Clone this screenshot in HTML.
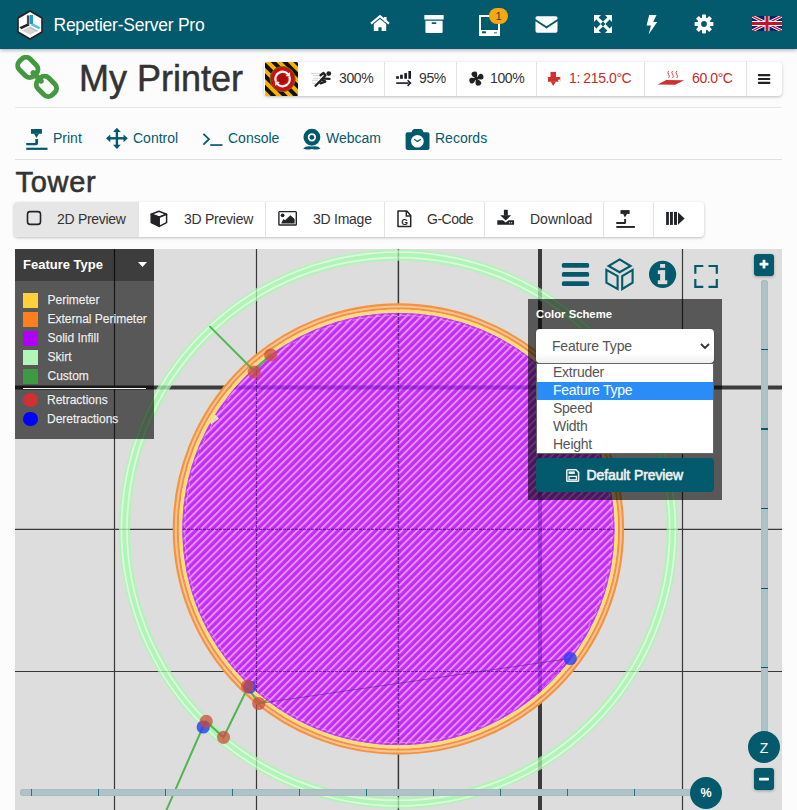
<!DOCTYPE html>
<html><head><meta charset="utf-8">
<style>
*{box-sizing:border-box}
html,body{margin:0;padding:0}
body{width:797px;height:810px;overflow:hidden;position:relative;background:#fcfcfc;font-family:"Liberation Sans",sans-serif;color:#333}
.a{position:absolute}
#hdr{left:0;top:0;width:797px;height:49px;background:#035a6c;box-shadow:0 1px 4px rgba(0,0,0,.35);z-index:5}
#title{left:53.5px;top:15px;font-size:17.5px;letter-spacing:-0.25px;color:#fff;line-height:20px;white-space:nowrap}
.ico{position:absolute;display:block}
#pname{left:79px;top:57px;font-size:36px;line-height:44px;color:#333;white-space:nowrap;-webkit-text-stroke:0.5px #333}
#hr1{left:15px;top:107px;width:767px;height:1px;background:#e6e6e6}
#hr2{left:15px;top:159px;width:767px;height:1px;background:#e0e0e0}
#status{left:264px;top:62px;width:518px;height:34px;background:#fff;border-radius:4px;box-shadow:0 1px 3px rgba(0,0,0,.25)}
.dv{position:absolute;top:0;width:1px;height:34px;background:#e3e3e3}
.st{position:absolute;top:8px;font-size:14px;line-height:17px;white-space:nowrap;color:#333;letter-spacing:-0.4px}
.red{color:#c62828}
.tab{position:absolute;top:130px;font-size:14px;line-height:17px;color:#035a6c;white-space:nowrap}
#tower{left:15.5px;top:164.5px;font-size:29px;line-height:34px;color:#333;font-weight:400;-webkit-text-stroke:0.6px #333;letter-spacing:0.7px}
#bgrp{left:14px;top:202px;width:690px;height:35px;background:#fff;border-radius:4px;box-shadow:0 1px 3px rgba(0,0,0,.25);overflow:hidden}
.bt{position:absolute;top:9px;font-size:14px;line-height:17px;color:#333;white-space:nowrap}
#canvas{left:15px;top:249px;width:767px;height:561px;background:#dddddd;overflow:hidden}

#legend{left:0;top:0;width:139px;height:190px;background:rgba(0,0,0,.6)}
#leghd{left:0;top:0;width:139px;height:32px;background:rgba(0,0,0,.3)}
.lt{position:absolute;left:32.5px;font-size:12px;line-height:14px;color:#f2f2f2;white-space:nowrap;text-shadow:0 0 1px rgba(0,0,0,.7);-webkit-text-stroke:0.25px #f2f2f2;margin-top:1px}
.sw{position:absolute;left:8px;width:15px;height:15px}
#cs{left:513px;top:50px;width:194px;height:201px;background:rgba(0,0,0,.6)}
.opt{position:absolute;left:0;width:176px;height:18px;font-size:14px;line-height:16px;color:#555;padding-left:16px;white-space:nowrap;letter-spacing:-0.25px}
.tbtn{position:absolute;background:#035a6c;border-radius:3px;box-shadow:0 1px 3px rgba(0,0,0,.3)}
</style></head><body>

<div id="hdr" class="a">
  <svg class="ico" style="left:17px;top:10px" width="26" height="30" viewBox="0 0 26 30">
    <polygon points="13,1 25,8 25,22 13,29 1,22 1,8" fill="#fff" stroke="#222" stroke-width="1.6"/>
    <polygon points="4.5,20.6 12.6,16.4 21.2,20.8 13.2,24.6" fill="#d4d4d4"/>
    <polygon points="12.6,16.4 21.2,20.8 19.8,21.6 12.6,18" fill="#bdbdbd"/>
    <rect x="9.9" y="5.4" width="2.4" height="10.4" fill="#4a4a4a"/>
    <rect x="12.6" y="5" width="3.4" height="9" fill="#1e9ad6"/>
    <polygon points="2.4,17.3 9.9,13.8 12.1,15.4 4.3,19.2" fill="#222"/>
    <polygon points="13.1,15.1 16.2,13.5 23.7,17.3 21.9,19.2" fill="#5bc0eb"/>
  </svg>
  <div id="title" class="a">Repetier-Server Pro</div>
  <svg class="ico" style="left:370px;top:15px" width="20" height="17" viewBox="0 0 20 17">
    <path d="M1,8.6 L10,1.2 L19,8.6" fill="none" stroke="#fff" stroke-width="2.2" stroke-linejoin="miter"/>
    <rect x="14" y="2" width="2.6" height="4.5" fill="#fff"/>
    <path d="M3.8,9 L10,4 L16.2,9 V16 H11.6 V12.2 H8.4 V16 H3.8 Z" fill="#fff"/>
  </svg>
  <svg class="ico" style="left:424px;top:15px" width="20" height="18" viewBox="0 0 20 18">
    <rect x="0.3" y="0" width="19.4" height="4.6" rx="0.6" fill="#fff"/>
    <path d="M1.4,5.8 H18.6 V17 Q18.6,18 17.6,18 H2.4 Q1.4,18 1.4,17 Z" fill="#fff"/>
    <rect x="7.6" y="7.3" width="4.8" height="1.7" rx="0.8" fill="#035a6c"/>
  </svg>
  <svg class="ico" style="left:478px;top:14px" width="23" height="22" viewBox="0 0 23 22">
    <rect x="2" y="2" width="19" height="19" fill="none" stroke="#fff" stroke-width="2"/>
    <rect x="1" y="16" width="21" height="5.5" fill="#fff"/>
    <rect x="4" y="17.3" width="4" height="2" fill="#035a6c"/>
    <rect x="16" y="18" width="3" height="1.5" fill="#035a6c" opacity=".6"/>
  </svg>
  <div class="a" style="left:489px;top:7.5px;width:19px;height:16px;border-radius:8px;background:#f6a90f;color:#3a3a3a;font-size:11px;line-height:16px;text-align:center">1</div>
  <svg class="ico" style="left:535px;top:16px" width="23" height="17" viewBox="0 0 23 17">
    <path d="M0.5,2 Q0.5,0.3 2.2,0.3 H20.8 Q22.5,0.3 22.5,2 V3 L11.5,10.2 L0.5,3 Z" fill="#fff"/>
    <path d="M0.5,5.2 L11.5,12.4 L22.5,5.2 V15 Q22.5,16.7 20.8,16.7 H2.2 Q0.5,16.7 0.5,15 Z" fill="#fff"/>
  </svg>
  <svg class="ico" style="left:593px;top:14px" width="20" height="20" viewBox="0 0 20 20">
    <g fill="#fff">
      <polygon points="1,1 8,1 5.6,3.4 10,7.6 7.6,10 3.4,5.6 1,8"/>
      <polygon points="19,1 19,8 16.6,5.6 12.4,10 10,7.6 14.4,3.4 12,1"/>
      <polygon points="1,19 1,12 3.4,14.4 7.6,10 10,12.4 5.6,16.6 8,19"/>
      <polygon points="19,19 12,19 14.4,16.6 10,12.4 12.4,10 16.6,14.4 19,12"/>
    </g>
  </svg>
  <svg class="ico" style="left:645px;top:14px" width="13" height="21" viewBox="0 0 13 21">
    <polygon points="4.2,1 11.5,1 8.2,8 12.2,8 3.6,20.5 6,11.5 1.6,11.5" fill="#fff"/>
  </svg>
  <svg class="ico" style="left:694px;top:14px" width="20" height="20" viewBox="0 0 20 20">
    <g fill="#fff">
      <circle cx="10" cy="10" r="6.6"/>
      <rect x="8" y="0.6" width="4" height="4" rx="0.8"/>
      <rect x="8" y="15.4" width="4" height="4" rx="0.8"/>
      <rect x="0.6" y="8" width="4" height="4" rx="0.8"/>
      <rect x="15.4" y="8" width="4" height="4" rx="0.8"/>
      <rect x="8" y="0.6" width="4" height="4" rx="0.8" transform="rotate(45 10 10)"/>
      <rect x="8" y="15.4" width="4" height="4" rx="0.8" transform="rotate(45 10 10)"/>
      <rect x="0.6" y="8" width="4" height="4" rx="0.8" transform="rotate(45 10 10)"/>
      <rect x="15.4" y="8" width="4" height="4" rx="0.8" transform="rotate(45 10 10)"/>
    </g>
    <circle cx="10" cy="10" r="2.9" fill="#035a6c"/>
  </svg>
  <svg class="ico" style="left:752px;top:16px" width="30" height="15" viewBox="0 0 60 30">
    <clipPath id="fc"><rect width="60" height="30"/></clipPath>
    <g clip-path="url(#fc)">
    <rect width="60" height="30" fill="#012169"/>
    <path d="M0,0 L60,30 M60,0 L0,30" stroke="#fff" stroke-width="6"/>
    <path d="M0,0 L60,30 M60,0 L0,30" stroke="#C8102E" stroke-width="2.5"/>
    <path d="M30,0 V30 M0,15 H60" stroke="#fff" stroke-width="10"/>
    <path d="M30,0 V30 M0,15 H60" stroke="#C8102E" stroke-width="6"/>
    </g>
  </svg>

</div>

<div id="pname" class="a">My Printer</div>
<svg class="a" style="left:15px;top:55px" width="45" height="45" viewBox="0 0 45 45">
  <g fill="none" stroke="#43993f" stroke-width="5">
    <rect x="-10.2" y="-7.6" width="20.4" height="15.2" rx="6" transform="translate(12.8,12.4) rotate(45)"/>
    <rect x="-10.2" y="-7.6" width="20.4" height="15.2" rx="6" transform="translate(31.4,31.4) rotate(45)"/>
    <line x1="18.3" y1="17.8" x2="26" y2="26" stroke-linecap="round" stroke-width="5.4"/>
  </g>
</svg>


<div id="hr1" class="a"></div>

<div id="status" class="a">
<svg class="a" style="left:1px;top:0px" width="33" height="34" viewBox="0 0 33 34">
  <defs>
    <pattern id="hz" patternUnits="userSpaceOnUse" width="8" height="8" patternTransform="rotate(-45)">
      <rect width="8" height="8" fill="#111"/><rect width="4" height="8" fill="#f7b500"/>
    </pattern>
<clipPath id="pclip"><circle cx="383.4" cy="280" r="216.1"/></clipPath>
  </defs>
  <rect width="33" height="34" rx="1.5" fill="url(#hz)"/>
  <circle cx="17.6" cy="17" r="12.6" fill="#c8120e" stroke="#7a6a18" stroke-width="0.9"/>
  <circle cx="17.6" cy="17" r="4.6" fill="#b00a0a"/>
  <path d="M10.83,19.46 A7.2,7.2 0 0 1 23.12,12.37" fill="none" stroke="#fff" stroke-width="2.3"/>
  <polygon points="25.05,14.67 25.1,10.06 20.5,13.92" fill="#fff"/>
  <path d="M24.37,14.54 A7.2,7.2 0 0 1 12.08,21.63" fill="none" stroke="#fff" stroke-width="2.3"/>
  <polygon points="10.15,19.33 10.1,23.94 14.7,20.08" fill="#fff"/>
</svg>
  <div class="dv" style="left:120px"></div>
  <div class="dv" style="left:192px"></div>
  <div class="dv" style="left:272px"></div>
  <div class="dv" style="left:380px"></div>
  <div class="dv" style="left:482px"></div>

<svg class="a" style="left:0;top:0" width="518" height="34" viewBox="0 0 518 34">
  <g stroke="#ccc" stroke-width="0.8">
    <line x1="47" y1="11.400000000000006" x2="56" y2="11.400000000000006"/>
    <line x1="49" y1="13.5" x2="56" y2="13.5"/>
    <line x1="49" y1="16.299999999999997" x2="57" y2="16.299999999999997"/>
    <line x1="48" y1="18.299999999999997" x2="54" y2="18.299999999999997"/>
    <line x1="48" y1="21.299999999999997" x2="52" y2="21.299999999999997"/>
  </g>
  <circle cx="64.80000000000001" cy="11.599999999999994" r="2.4" fill="#222"/>
  <g fill="none" stroke="#222" stroke-width="2.3" stroke-linecap="round" stroke-linejoin="round">
    <polyline points="56.5,13.2 59.5,11.0 61.5,13.2 57.7,17.6 51.5,23.8"/>
    <polyline points="60.6,16.7 65.5,16.9"/>
    <polyline points="57.7,17.6 61.3,19.6 56.5,21.3"/>
  </g>
  <g fill="#1a1a2a">
    <rect x="132.2" y="14.200000000000003" width="2.7" height="2.6"/>
    <rect x="136.10000000000002" y="12.700000000000003" width="2.7" height="4.1"/>
    <rect x="140.3" y="11.099999999999994" width="2.7" height="5.7"/>
    <rect x="144.39999999999998" y="9" width="2.6" height="7.8"/>
    <rect x="132.2" y="20.299999999999997" width="12.5" height="1.6"/>
  </g>
  <polyline points="143.6,18.3 146.5,21.1 143.6,23.9" fill="none" stroke="#1a1a2a" stroke-width="1.5"/>
  <g fill="#222" transform="translate(212.4,16.6) rotate(-10) scale(1.08)">
    <path d="M0,0 C-1.5,-1.5 -3.6,-2.5 -3.8,-4.4 C-4,-6.5 -1.5,-7.2 0.3,-6.6 C2.2,-6 1.8,-3.2 0,0 Z"/>
    <path d="M0,0 C-1.5,-1.5 -3.6,-2.5 -3.8,-4.4 C-4,-6.5 -1.5,-7.2 0.3,-6.6 C2.2,-6 1.8,-3.2 0,0 Z" transform="rotate(90)"/>
    <path d="M0,0 C-1.5,-1.5 -3.6,-2.5 -3.8,-4.4 C-4,-6.5 -1.5,-7.2 0.3,-6.6 C2.2,-6 1.8,-3.2 0,0 Z" transform="rotate(180)"/>
    <path d="M0,0 C-1.5,-1.5 -3.6,-2.5 -3.8,-4.4 C-4,-6.5 -1.5,-7.2 0.3,-6.6 C2.2,-6 1.8,-3.2 0,0 Z" transform="rotate(270)"/>
    <circle r="1.6"/>
  </g>
  <g fill="#d03030">
    <rect x="286.5" y="9.900000000000006" width="5.5" height="5.5"/>
    <path d="M284,15 H296.29999999999995 V19.799999999999997 H284 Z M295.3,17.400000000000006 a1.3,1.3 0 1 0 0.01,0 Z" fill-rule="evenodd"/>
    <polygon points="286.6,19.6 291.9,19.6 289.2,24.0"/>
    <polygon points="393.6,22.6 402.2,18.0 420.2,18.2 411.2,22.8"/>
  </g>
  <g fill="none" stroke="#d03030" stroke-width="0.9">
    <path d="M404.6,9 q-1.6,1.6 0,3.4 q1.6,1.8 0,3.6"/>
    <path d="M408.6,9 q-1.6,1.6 0,3.4 q1.6,1.8 0,3.6"/>
    <path d="M412.79999999999995,9 q-1.6,1.6 0,3.4 q1.6,1.8 0,3.6"/>
  </g>
  <g fill="#222">
    <rect x="493.79999999999995" y="12" width="12.6" height="2.2" rx="1"/>
    <rect x="493.79999999999995" y="15.900000000000006" width="12.6" height="2.2" rx="1"/>
    <rect x="493.79999999999995" y="19.799999999999997" width="12.6" height="2.2" rx="1"/>
  </g>
</svg>
  <div class="st" style="left:75px">300%</div>
  <div class="st" style="left:155px">95%</div>
  <div class="st" style="left:226px">100%</div>
  <div class="st red" style="left:305px">1: 215.0°C</div>
  <div class="st red" style="left:428px">60.0°C</div>
</div>


<svg class="a" style="left:0;top:120px" width="440" height="35" viewBox="0 120 440 35">
  <g fill="#035a6c">
    <rect x="31" y="129" width="10.9" height="4.8"/>
    <polygon points="34,133.6 39,133.6 36.5,138"/>
    <path d="M35.3,139.1 H38.1 V142.8 Q38.1,145.3 35.6,145.3 H26.2 V143 H35.3 Z"/>
    <rect x="26.2" y="147.7" width="21.3" height="2.2"/>
  </g>
  <g fill="#035a6c">
    <rect x="108" y="137.1" width="18" height="2.4"/>
    <rect x="115.7" y="130" width="2.4" height="17"/>
    <polygon points="106,138.3 110.3,134.4 110.3,142.2"/>
    <polygon points="127.8,138.3 123.5,134.4 123.5,142.2"/>
    <polygon points="116.9,127.8 113,132 120.8,132"/>
    <polygon points="116.9,148.9 113,144.7 120.8,144.7"/>
  </g>
  <polyline points="203.4,133.8 209,139.2 203.4,144.6" fill="none" stroke="#035a6c" stroke-width="1.8"/>
  <rect x="210.2" y="144.2" width="12.3" height="1.7" fill="#035a6c"/>
  <circle cx="311.9" cy="137.3" r="6.3" fill="none" stroke="#035a6c" stroke-width="4.3"/>
  <circle cx="311.9" cy="137.3" r="2.4" fill="#035a6c"/>
  <path d="M303.2,148.6 Q306,145.3 311.9,146.6 Q317.8,145.3 320.5,148.6 Q317.8,150.2 311.9,149 Q306,150.2 303.2,148.6 Z" fill="#035a6c"/>
  <path d="M405.6,134.3 Q405.6,132.3 407.6,132.3 H411.5 L412.3,130.4 Q412.8,128.9 414.3,128.9 H420.8 Q422.3,128.9 422.8,130.4 L423.6,132.3 H427.5 Q429.5,132.3 429.5,134.3 V147.9 Q429.5,149.9 427.5,149.9 H407.6 Q405.6,149.9 405.6,147.9 Z" fill="#035a6c"/>
  <circle cx="417.4" cy="141.2" r="6.3" fill="#fff"/>
  <polyline points="414.2,139.3 417.4,141.5 420.8,139.3" fill="none" stroke="#035a6c" stroke-width="1.3"/>
</svg>
<div class="tab" style="left:53px">Print</div>
<div class="tab" style="left:133px">Control</div>
<div class="tab" style="left:228px">Console</div>
<div class="tab" style="left:326px">Webcam</div>
<div class="tab" style="left:435px">Records</div>
<div id="hr2" class="a"></div>

<div id="tower" class="a">Tower</div>

<div id="bgrp" class="a">
  <div class="a" style="left:0;top:0;width:125px;height:35px;background:#e6e6e6"></div>
  <div class="dv" style="left:251px;height:35px"></div>
  <div class="dv" style="left:370px;height:35px"></div>
  <div class="dv" style="left:470px;height:35px"></div>
  <div class="dv" style="left:589px;height:35px"></div>
  <div class="dv" style="left:639px;height:35px"></div>

<svg class="a" style="left:0;top:0" width="690" height="35" viewBox="14 202 690 35">
  <rect x="27.5" y="211.6" width="13" height="12.8" rx="2.6" fill="none" stroke="#222428" stroke-width="1.6"/>
  <g stroke="#222428" stroke-width="1.5" stroke-linejoin="round">
    <polygon points="151.2,214.2 159,211.3 166.6,214.2 159.2,217.3" fill="#fff"/>
    <polygon points="151.2,214.2 159.2,217.3 159.2,226.4 151.2,222.6" fill="#222428"/>
    <polygon points="159.2,217.3 166.6,214.2 166.6,222.6 159.2,226.4" fill="#fff"/>
  </g>
  <rect x="278.9" y="211.6" width="17.4" height="13.4" rx="0.8" fill="none" stroke="#222428" stroke-width="1.4"/>
  <circle cx="282.6" cy="215.3" r="1.9" fill="#222428"/>
  <polygon points="281.1,223.6 283.5,219.1 285.1,220.2 290.4,215.2 294.6,219.1 294.6,223.6" fill="#222428"/>
  <path d="M398,210.9 H406.8 L410.7,215.4 V226.6 H398 Z" fill="none" stroke="#222428" stroke-width="1.5" stroke-linejoin="round"/>
  <path d="M406.3,210.9 V216 H410.9" fill="none" stroke="#222428" stroke-width="1.4"/>
  <text x="404.6" y="224.6" font-family="Liberation Sans" font-weight="700" font-size="8.6" text-anchor="middle" fill="#222428">G</text>
  <rect x="503.9" y="209.8" width="3.9" height="5.8" fill="#222428"/>
  <polygon points="500.2,215.2 511.2,215.2 505.7,220.6" fill="#222428"/>
  <path d="M497.3,220.2 H502.8 L505.7,222.6 L508.6,220.2 H514.1 V224.7 H497.3 Z" fill="#222428"/>
  <rect x="509.2" y="222" width="0.9" height="1.4" fill="#ddd"/><rect x="511.2" y="222" width="0.9" height="1.4" fill="#ddd"/>
  <g fill="#222428">
    <rect x="620.5" y="210.1" width="9.1" height="3.8"/>
    <polygon points="623,213.8 627,213.8 625,217.4"/>
    <path d="M624.2,219.1 H626.1 V222.6 Q626.1,223.9 624.8,223.9 H616.3 V222.1 H624.2 Z"/>
    <rect x="616.3" y="226" width="18.6" height="1.9"/>
    <rect x="666.1" y="211.9" width="2.8" height="13"/>
    <rect x="670" y="211.9" width="2.9" height="13"/>
    <rect x="674" y="211.9" width="3" height="13"/>
    <polygon points="678,212.3 684.6,218.5 678,224.7"/>
  </g>
</svg>
  <div class="bt" style="left:43px;letter-spacing:-0.3px">2D Preview</div>
  <div class="bt" style="left:170px;letter-spacing:-0.25px">3D Preview</div>
  <div class="bt" style="left:299px;letter-spacing:-0.25px">3D Image</div>
  <div class="bt" style="left:413px;letter-spacing:-0.5px">G-Code</div>
  <div class="bt" style="left:516px">Download</div>
</div>

<div id="canvas" class="a">
<svg class="a" style="left:0;top:0" width="767" height="561" viewBox="0 0 767 561">
<defs>
<pattern id="hatch" patternUnits="userSpaceOnUse" width="5.3" height="5.3" patternTransform="rotate(45)">
<rect width="5.3" height="5.3" fill="#c22cf8"/>
<rect x="0" y="0" width="2" height="5.3" fill="#e494fa"/>
</pattern>
</defs>
<g stroke="#383838" fill="none">
<line x1="99.5" y1="0" x2="99.5" y2="561" stroke-width="1.2"/>
<line x1="241.5" y1="0" x2="241.5" y2="561" stroke-width="1.2"/>
<line x1="383.4" y1="0" x2="383.4" y2="561" stroke-width="1.5"/>
<line x1="667.5" y1="0" x2="667.5" y2="561" stroke-width="1.2"/>
<line x1="525" y1="0" x2="525" y2="561" stroke-width="4" stroke="#3c3c3c"/>
<line x1="0" y1="138.5" x2="767" y2="138.5" stroke-width="4" stroke="#3c3c3c"/>
<line x1="0" y1="280.3" x2="767" y2="280.3" stroke-width="1.2"/>
<line x1="0" y1="422.5" x2="767" y2="422.5" stroke-width="1.2"/>
</g>
<g opacity="0.72">
<circle cx="383.4" cy="280" r="273.9" fill="none" stroke="#9effa6" stroke-width="11.2"/>
<circle cx="383.4" cy="280" r="277.0" fill="none" stroke="#e4ffe4" stroke-width="1.7"/>
<circle cx="383.4" cy="280" r="271.4" fill="none" stroke="#e4ffe4" stroke-width="1.7"/>
</g>
<circle cx="383.4" cy="280" r="222.6" fill="none" stroke="#f5923f" stroke-width="6.2"/>
<circle cx="383.4" cy="280" r="222.6" fill="none" stroke="#f9c395" stroke-width="2"/>
<circle cx="383.4" cy="280" r="217.8" fill="none" stroke="#f8dd80" stroke-width="3.6"/>
<circle cx="383.4" cy="280" r="216.1" fill="url(#hatch)" opacity="1"/>
<circle cx="383.4" cy="280" r="215.7" fill="none" stroke="#c43cf0" stroke-width="1" opacity="0.8"/>
<polygon points="199.6,165.2 204,169.4 196.2,175.4 194.5,172" fill="#f3e090"/><polygon points="200.3,166.3 203.4,169.2 198.6,172.6" fill="#dfe6d8"/>
<circle cx="383.4" cy="280" r="213.6" fill="none" stroke="#e6a6fa" stroke-width="1" opacity="0.7" stroke-dasharray="5 3"/>
<g clip-path="url(#pclip)"><g stroke="#3a0a50" fill="none" opacity="0.62" stroke-dasharray="3 1">
<line x1="99.5" y1="0" x2="99.5" y2="561" stroke-width="1.2"/>
<line x1="241.5" y1="0" x2="241.5" y2="561" stroke-width="1.2"/>
<line x1="383.4" y1="0" x2="383.4" y2="561" stroke-width="1.5"/>
<line x1="667.5" y1="0" x2="667.5" y2="561" stroke-width="1.2"/>
<line x1="0" y1="280.3" x2="767" y2="280.3" stroke-width="1.2"/>
<line x1="0" y1="422.5" x2="767" y2="422.5" stroke-width="1.2"/>
</g>
<g stroke="#5000a0" fill="none" opacity="0.38">
<line x1="525" y1="0" x2="525" y2="561" stroke-width="4"/>
<line x1="0" y1="138.5" x2="767" y2="138.5" stroke-width="4"/>
</g></g>
<line x1="243.7" y1="454.5" x2="555.3" y2="409.5" stroke="#5a2a70" stroke-width="1" opacity="0.6"/>
<g stroke="#52b552" stroke-width="2" fill="none" stroke-linecap="round">
<polyline points="195.0,77.6 239.2,122.0 255.7,105.5"/>
<polyline points="150.6,563.0 188.3,477.0 191.2,472.4 208.5,488.3 232.6,439.0 234.0,440.0 243.7,454.5 251.0,452.0"/>
</g>
<g fill="#2a3ef0" opacity="0.8">
<circle cx="188.2" cy="478" r="6.6"/>
<circle cx="234.7" cy="438" r="6.6"/>
<circle cx="555.3" cy="409.5" r="6.6"/>
</g>
<g fill="#cc4a3c" opacity="0.72">
<circle cx="239.2" cy="123" r="6.6"/>
<circle cx="255.7" cy="106" r="6.6"/>
<circle cx="191.2" cy="472.4" r="6.6"/>
<circle cx="208.5" cy="488.29999999999995" r="6.6"/>
<circle cx="243.7" cy="454.5" r="6.6"/>
</g>

<g fill="#cc4a3c" opacity="0.72">
<circle cx="232.6" cy="437.20000000000005" r="6.6"/>
</g>
</svg>

<div id="legend" class="a">
  <div id="leghd" class="a"></div>
  <div class="a" style="left:8px;top:8px;font-size:13px;font-weight:700;color:#fff;line-height:15px;white-space:nowrap">Feature Type</div>
  <svg class="a" style="left:123px;top:13px" width="9" height="5" viewBox="0 0 9 5"><polygon points="0,0 9,0 4.5,5" fill="#fff"/></svg>
  <div class="sw" style="top:44px;background:#ffd03a"></div>
  <div class="sw" style="top:63px;background:#ff7f1a"></div>
  <div class="sw" style="top:82px;background:#b000f5"></div>
  <div class="sw" style="top:101px;background:#b2f5b8"></div>
  <div class="sw" style="top:120px;background:#3e9a40"></div>
  <div class="lt" style="top:43px">Perimeter</div>
  <div class="lt" style="top:62px">External Perimeter</div>
  <div class="lt" style="top:81px">Solid Infill</div>
  <div class="lt" style="top:100px">Skirt</div>
  <div class="lt" style="top:119px">Custom</div>
  <div class="a" style="left:8px;top:138.5px;width:123px;height:1.5px;background:#f4f4f4"></div>
  <div class="a" style="left:8px;top:143.5px;width:14.5px;height:14.5px;border-radius:50%;background:#d03030"></div>
  <div class="a" style="left:8px;top:162.5px;width:14.5px;height:14.5px;border-radius:50%;background:#0000ff"></div>
  <div class="lt" style="left:32px;top:143px">Retractions</div>
  <div class="lt" style="left:32px;top:162px">Deretractions</div>
</div>

<div id="cs" class="a">
  <div class="a" style="left:8px;top:8.3px;font-size:11.3px;font-weight:700;color:#fff;line-height:14px;white-space:nowrap">Color Scheme</div>
  <div class="a" style="left:8px;top:30px;width:178px;height:34px;background:linear-gradient(#fff 70%,#f0f0f0);border-radius:4px;box-shadow:0 1px 2px rgba(0,0,0,.3)"></div>
  <div class="a" style="left:24px;top:39px;font-size:14px;line-height:17px;color:#555;white-space:nowrap;letter-spacing:-0.2px">Feature Type</div>
  <svg class="a" style="left:172px;top:44px" width="10" height="7" viewBox="0 0 10 7"><polyline points="1,1 5,5 9,1" fill="none" stroke="#333" stroke-width="1.8"/></svg>
  <div class="a" style="left:8px;top:64px;width:178px;height:91px;background:#fff;border:1px solid #666;overflow:hidden">
    <div class="opt" style="top:0">Extruder</div>
    <div class="opt" style="top:18px;background:#2a8df7;color:#fff">Feature Type</div>
    <div class="opt" style="top:36px">Speed</div>
    <div class="opt" style="top:54px">Width</div>
    <div class="opt" style="top:72px">Height</div>
  </div>
  <div class="a" style="left:8px;top:159px;width:178px;height:34px;background:#035a6c;border-radius:4px"></div>
  <svg class="a" style="left:37.5px;top:169.5px" width="14" height="13" viewBox="0 0 14 13">
    <path d="M0.8,1.6 Q0.8,0.8 1.6,0.8 H10 L12.6,3.4 V11.4 Q12.6,12.2 11.8,12.2 H1.6 Q0.8,12.2 0.8,11.4 Z" fill="none" stroke="#eee" stroke-width="1.5"/>
    <rect x="2.6" y="2.4" width="6.2" height="2.6" fill="#eee"/>
    <rect x="3" y="7.4" width="7.4" height="3.4" fill="none" stroke="#eee" stroke-width="1.3"/>
  </svg>
  <div class="a" style="left:58.5px;top:167.5px;font-size:14px;font-weight:400;line-height:16px;color:#f0f0f0;white-space:nowrap;-webkit-text-stroke:0.6px #f0f0f0;letter-spacing:-0.1px">Default Preview</div>
</div>

<div class="tbtn" style="left:739px;top:5px;width:20px;height:22px"></div>
<div class="a" style="left:745.5px;top:31px;width:7px;height:455px;background:#aec2c8;border-radius:3.5px;box-shadow:inset 0 0 1px rgba(0,0,0,.3)"></div>
<div class="a" style="left:733px;top:482px;width:32px;height:32px;border-radius:50%;background:#035a6c"></div>
<div class="tbtn" style="left:739px;top:519px;width:20px;height:22px"></div>
<div class="a" style="left:745.5px;top:99.8px;width:7px;height:1.4px;background:#035a6c"></div><div class="a" style="left:745.5px;top:179.3px;width:7px;height:1.4px;background:#035a6c"></div><div class="a" style="left:745.5px;top:258.8px;width:7px;height:1.4px;background:#035a6c"></div><div class="a" style="left:745.5px;top:338.8px;width:7px;height:1.4px;background:#035a6c"></div><div class="a" style="left:745.5px;top:417.8px;width:7px;height:1.4px;background:#035a6c"></div>
<div class="a" style="left:733px;top:482.5px;width:32px;height:32px;line-height:32px;text-align:center;color:#fff;font-size:14px">Z</div>

<svg class="a" style="left:0;top:0;pointer-events:none" width="767" height="561" viewBox="15 249 767 561">
  <g fill="#035a6c">
    <rect x="561.9" y="263" width="27.2" height="4.8" rx="1.6"/>
    <rect x="561.9" y="272.1" width="27.2" height="4.7" rx="1.6"/>
    <rect x="561.9" y="281.3" width="27.2" height="4.8" rx="1.6"/>
  </g>
  <g fill="none" stroke="#035a6c" stroke-width="2.1" stroke-linejoin="miter">
    <polygon points="619.6,259.4 630.6,266 619.6,272.2 608.6,266"/>
    <polygon points="606.4,269.8 617.6,276.2 617.6,289 606.4,282.6"/>
    <polygon points="632.6,269.8 622.2,276.2 622.2,289 632.6,282.6"/>
  </g>
  <circle cx="662.6" cy="274.3" r="13.6" fill="#035a6c"/>
  <g fill="#dddddd">
    <rect x="660.1" y="264" width="5" height="3.8"/>
    <rect x="657.8" y="270.3" width="7.3" height="3.8"/>
    <rect x="660.1" y="270.3" width="5" height="13.8"/>
    <rect x="657.8" y="280.3" width="9.5" height="3.8"/>
  </g>
  <g fill="none" stroke="#035a6c" stroke-width="2.2">
    <polyline points="695.3,273.8 695.3,266 703.3,266"/>
    <polyline points="708.5,266 716.8,266 716.8,273.8"/>
    <polyline points="695.3,279 695.3,286.8 703.3,286.8"/>
    <polyline points="708.5,286.8 716.8,286.8 716.8,279"/>
  </g>
  <g fill="#fff">
    <rect x="759.6" y="262.8" width="8.8" height="2.8" rx="0.6"/>
    <rect x="762.6" y="259.8" width="2.8" height="8.8" rx="0.6"/>
    <rect x="759" y="777.8" width="10" height="2.6" rx="0.5"/>
  </g>
</svg>


<div class="a" style="left:4.6px;top:540.4px;width:690px;height:7px;background:#aec2c8;border-radius:3.5px;box-shadow:inset 0 0 1px rgba(0,0,0,.3)"></div><div class="a" style="left:15.8px;top:540.4px;width:1.2px;height:7px;background:#2a7080"></div><div class="a" style="left:82.8px;top:540.4px;width:1.2px;height:7px;background:#2a7080"></div><div class="a" style="left:149.8px;top:540.4px;width:1.2px;height:7px;background:#2a7080"></div><div class="a" style="left:216.8px;top:540.4px;width:1.2px;height:7px;background:#2a7080"></div><div class="a" style="left:283.8px;top:540.4px;width:1.2px;height:7px;background:#2a7080"></div><div class="a" style="left:350.8px;top:540.4px;width:1.2px;height:7px;background:#2a7080"></div><div class="a" style="left:417.8px;top:540.4px;width:1.2px;height:7px;background:#2a7080"></div><div class="a" style="left:484.8px;top:540.4px;width:1.2px;height:7px;background:#2a7080"></div><div class="a" style="left:551.8px;top:540.4px;width:1.2px;height:7px;background:#2a7080"></div><div class="a" style="left:618.8px;top:540.4px;width:1.2px;height:7px;background:#2a7080"></div>
<div class="a" style="left:675px;top:528px;width:32px;height:32px;border-radius:50%;background:#035a6c"></div><div class="a" style="left:675px;top:528px;width:32px;height:32px;line-height:32px;text-align:center;color:#fff;font-size:12.5px;font-weight:700">%</div>

</div>

</body></html>
